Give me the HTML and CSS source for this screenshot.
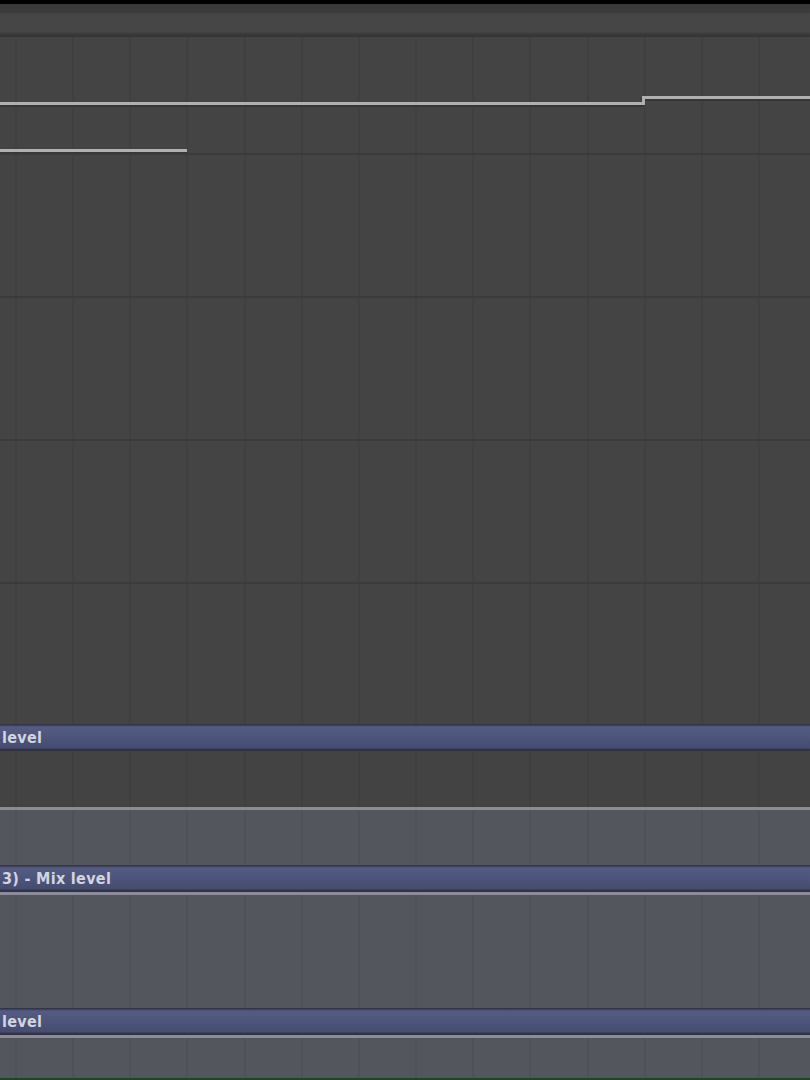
FILE: index.html
```html
<!DOCTYPE html>
<html lang="en">
<head>
    <meta charset="UTF-8">
    <meta name="viewport" content="width=device-width, initial-scale=1.0">
    <title>Playlist - Automation</title>
    <link rel="stylesheet" href="styles.css">
</head>
<body>
<div id="playlist">
    <div class="top-edge"></div>
    <div class="ruler"></div>

    <div class="track first">
        <svg class="automation" width="810" height="116" viewBox="0 0 810 116">
            <!-- shadow under the curves -->
            <polyline points="0,68.5 643,68.5 643,62.5 810,62.5" fill="none" stroke="#363636" stroke-width="3"/>
            <polyline points="0,115.5 187,115.5" fill="none" stroke="#363636" stroke-width="2"/>
            <!-- curves -->
            <polyline points="0,66.5 643.5,66.5 643.5,60.5 810,60.5" fill="none" stroke="#b0b0b0" stroke-width="3"/>
            <polyline points="0,113.5 187,113.5" fill="none" stroke="#b0b0b0" stroke-width="3"/>
        </svg>
    </div>
    <div class="track"></div>
    <div class="track"></div>
    <div class="track"></div>
    <div class="track last"></div>

    <div class="clip-header"><span>level</span></div>
    <div class="clip-body dark"></div>

    <div class="clip-body grey top-lit short"></div>
    <div class="clip-header"><span>3) - Mix level</span></div>
    <div class="clip-body grey top-lit tall"></div>
    <div class="clip-header"><span>level</span></div>
    <div class="clip-body grey top-lit rest"></div>
    <div class="bottom-edge"></div>
</div>
</body>
</html>
```

FILE: styles.css
```css
* {
    margin: 0;
    padding: 0;
    box-sizing: border-box;
}

body {
    background-color: #434343;
    width: 810px;
    height: 1080px;
    overflow: hidden;
}

#playlist {
    display: flex;
    flex-direction: column;
    width: 810px;
    height: 1080px;
}

.top-edge {
    height: 4px;
    background-color: #000;
}

.ruler {
    height: 33px;
    background: linear-gradient(to bottom, #373737 0px, #3b3b3b 8px, #464646 10px, #464646 28px, #3d3d3d 29px, #333333 33px);
}

/* beat lines every ~57px, first one at x=16 */
.track,
.clip-body {
    background-image: repeating-linear-gradient(to right,
        transparent 0px, transparent 15px,
        rgba(0, 0, 0, 0.06) 15px, rgba(0, 0, 0, 0.06) 17px,
        transparent 17px, transparent 57.15px);
}

.track {
    position: relative;
    height: 143px;
    background-color: #444444;
    border-top: 2px solid #3b3b3b;
}

.track.first {
    height: 116px;
    border-top: none;
}

.track.last {
    height: 142px;
}

.automation {
    position: absolute;
    left: 0;
    top: 0;
}

.clip-header {
    height: 27px;
    flex-shrink: 0;
    display: flex;
    align-items: center;
    background: linear-gradient(to bottom, #2f3140 0px, #383b50 1px, #545c83 3px, #4c547a 14px, #454c70 24px, #34374a 25px, #2e303c 27px);
    color: #d2d5e0;
    font-family: "DejaVu Sans Condensed", "DejaVu Sans", sans-serif;
    font-weight: bold;
    font-size: 16px;
    letter-spacing: 0.3px;
    white-space: nowrap;
    overflow: hidden;
}

.clip-header span {
    padding-left: 2px;
    padding-bottom: 1px;
}

.clip-body.dark {
    height: 56px;
    background-color: #434343;
}

.clip-body.grey {
    background-color: #53565d;
}

.clip-body.top-lit {
    border-top: 3px solid #8b8c99;
}

.clip-body.short {
    height: 58px;
}

.clip-body.tall {
    height: 116px;
}

.clip-body.rest {
    flex: 1;
}

.bottom-edge {
    height: 2px;
    background-color: #1f4620;
}
```
